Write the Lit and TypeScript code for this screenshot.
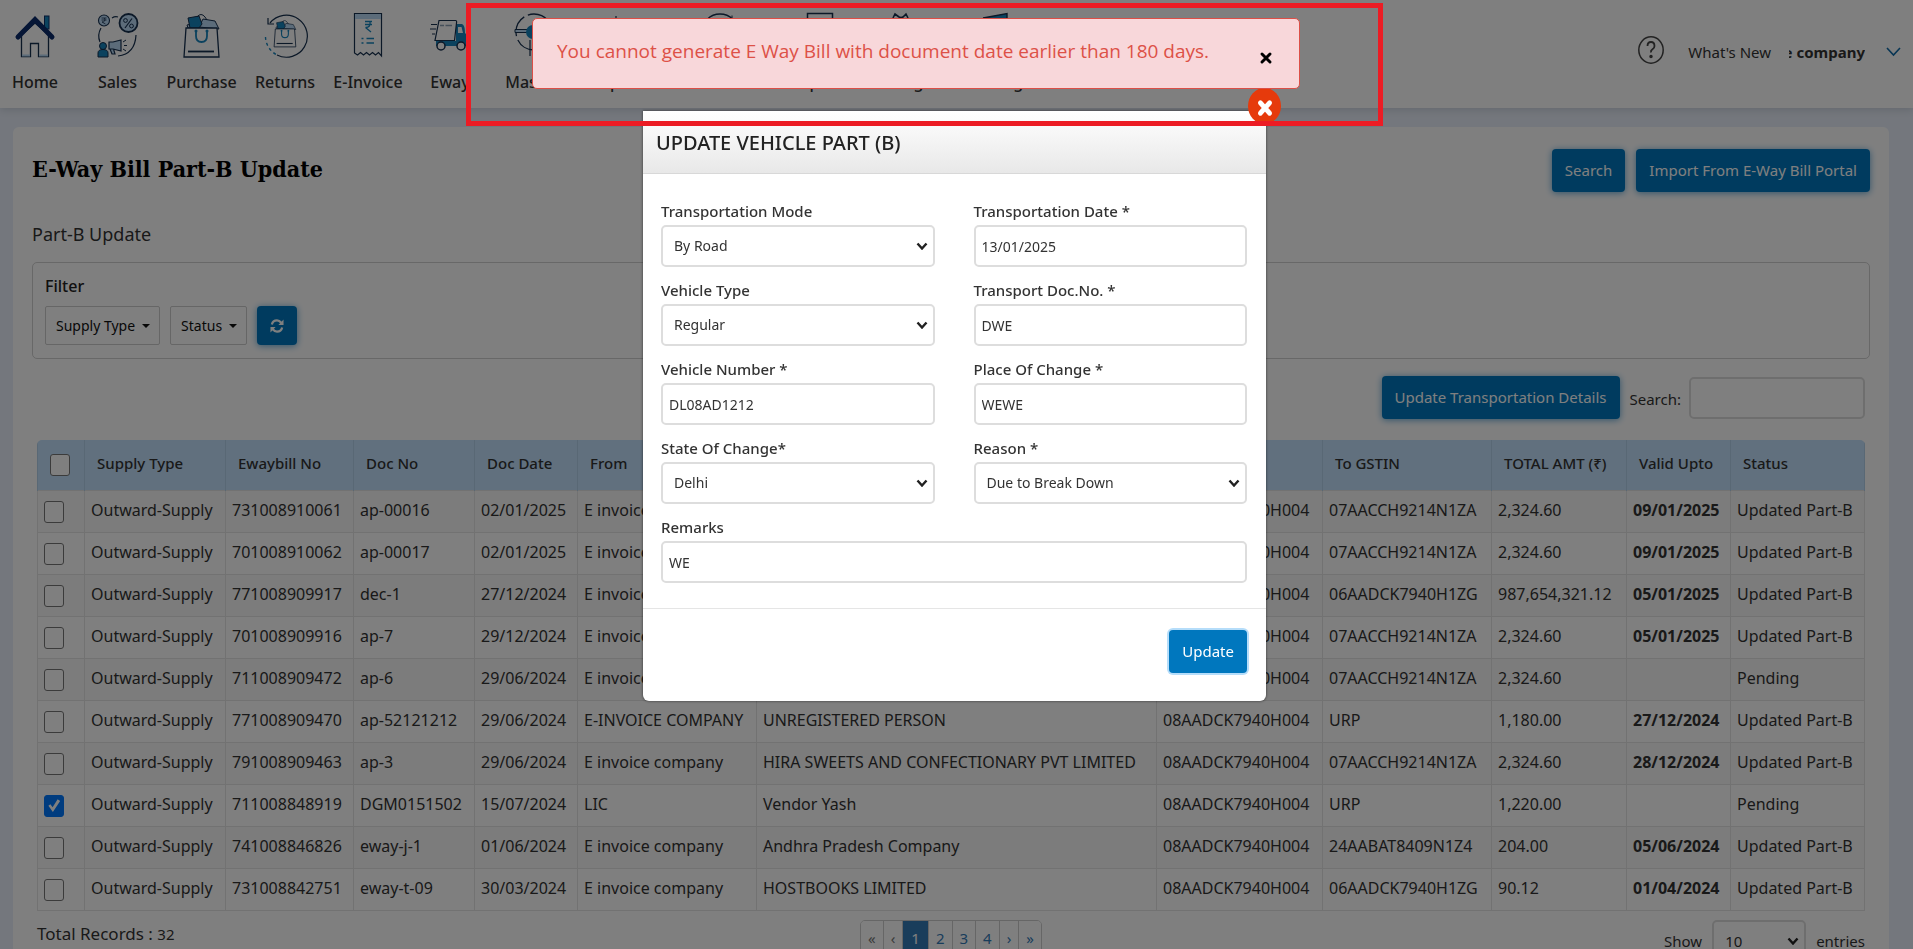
import { LitElement, html, svg, css } from "lit";
import { classMap } from "lit/directives/class-map.js";

type Row = {
  supply: string; bill: string; doc: string; date: string; from: string; to: string;
  fromGst: string; toGst: string; amount: string; valid: string; status: string; checked?: boolean;
};

const row = (
  bill: string, doc: string, date: string, from: string, to: string,
  toGst: string, amount: string, valid: string, status: string, checked = false,
): Row => ({ supply: "Outward-Supply", bill, doc, date, from, to, fromGst: "08AADCK7940H004", toGst, amount, valid, status, checked });

const ROWS: Row[] = [
  row("731008910061", "ap-00016", "02/01/2025", "E invoice company", "HOSTBOOKS LIMITED", "07AACCH9214N1ZA", "2,324.60", "09/01/2025", "Updated Part-B"),
  row("701008910062", "ap-00017", "02/01/2025", "E invoice company", "HOSTBOOKS LIMITED", "07AACCH9214N1ZA", "2,324.60", "09/01/2025", "Updated Part-B"),
  row("771008909917", "dec-1", "27/12/2024", "E invoice company", "HOSTBOOKS LIMITED", "06AADCK7940H1ZG", "987,654,321.12", "05/01/2025", "Updated Part-B"),
  row("701008909916", "ap-7", "29/12/2024", "E invoice company", "HOSTBOOKS LIMITED", "07AACCH9214N1ZA", "2,324.60", "05/01/2025", "Updated Part-B"),
  row("711008909472", "ap-6", "29/06/2024", "E invoice company", "HOSTBOOKS LIMITED", "07AACCH9214N1ZA", "2,324.60", "", "Pending"),
  row("771008909470", "ap-52121212", "29/06/2024", "E-INVOICE COMPANY", "UNREGISTERED PERSON", "URP", "1,180.00", "27/12/2024", "Updated Part-B"),
  row("791008909463", "ap-3", "29/06/2024", "E invoice company", "HIRA SWEETS AND CONFECTIONARY PVT LIMITED", "07AACCH9214N1ZA", "2,324.60", "28/12/2024", "Updated Part-B"),
  row("711008848919", "DGM0151502", "15/07/2024", "LIC", "Vendor Yash", "URP", "1,220.00", "", "Pending", true),
  row("741008846826", "eway-j-1", "01/06/2024", "E invoice company", "Andhra Pradesh Company", "24AABAT8409N1Z4", "204.00", "05/06/2024", "Updated Part-B"),
  row("731008842751", "eway-t-09", "30/03/2024", "E invoice company", "HOSTBOOKS LIMITED", "06AADCK7940H1ZG", "90.12", "01/04/2024", "Updated Part-B"),
];

const COLUMNS: [string, number][] = [
  ["", 47], ["Supply Type", 141], ["Ewaybill No", 128], ["Doc No", 121], ["Doc Date", 103],
  ["From", 179], ["To", 400], ["From GSTIN", 166], ["To GSTIN", 169], ["TOTAL AMT (₹)", 135],
  ["Valid Upto", 104], ["Status", 134],
];
const COLUMN_TOTAL = COLUMNS.reduce((sum, [, w]) => sum + w, 0);

const NAVY = "#16304f";
const BLUE = "#1684bd";
const PALE = "#b8d8f4";

const bag = svg`
  <path d="M9 16 8 13 17 11 20 16Z M20 15 24 7 36 9 40 17Z" fill=${PALE} stroke=${NAVY} stroke-width="1"/>
  <path d="M9 6 20 4 23 12 20 16 11 16Z" fill=${BLUE} stroke=${NAVY} stroke-width="1"/>
  <path d="M18 5Q22 0 26 5L28 8" fill="none" stroke=${NAVY} stroke-width="1"/>
  <path d="M7 16H38L40 45H5Z" fill="#fff" stroke=${NAVY} stroke-width="1.3"/>
  <path d="M17 19V24Q17 30 22.500 30T28 24V19" fill="none" stroke=${BLUE} stroke-width="1.8"/>
  <circle cx="17" cy="19" r="1.500" fill=${BLUE}/><circle cx="28" cy="19" r="1.500" fill=${BLUE}/>
  <path d="M9 39.500H35" stroke=${NAVY} stroke-width="1.8"/>`;

const ICONS: Record<string, unknown> = {
  home: svg`
    <rect x="32.500" y="4" width="4.500" height="13" fill=${BLUE} stroke="#0b2c66" stroke-width="1"/>
    <path d="M9.500 23V44.500H18.500V31.500H26.500V44.500H36.500V23L23 11Z" fill="#fff" stroke=${NAVY} stroke-width="1.3"/>
    <path d="M10 43.500H18M27 43.500H36" stroke=${PALE} stroke-width="2"/>
    <path d="M6 25 23 7.500 40 25" fill="none" stroke="#0a2a6b" stroke-width="5" stroke-linecap="round"/>`,
  sales: svg`
    <circle cx="9" cy="8.500" r="5.500" fill=${PALE} stroke=${NAVY} stroke-width="1.1"/>
    <path d="M6.500 6H11.500M6.500 8H11.500M7 10Q11 10 9.500 6M7 10 10.500 12" fill="none" stroke=${NAVY} stroke-width=".8"/>
    <path d="M17 6Q20 4 23 5M6 16Q2 23 5 30M41 23Q40 42 23 44" fill="none" stroke=${NAVY} stroke-width="1.2"/>
    <circle cx="33.500" cy="11" r="9" fill=${PALE} stroke=${NAVY} stroke-width="1.8"/>
    <path d="M37 6.500 30 16" stroke=${NAVY} stroke-width="1.200"/>
    <circle cx="30.500" cy="8.500" r="1.900" fill="none" stroke=${NAVY}/><circle cx="36.500" cy="14" r="1.900" fill="none" stroke=${NAVY}/>
    <circle cx="8" cy="34" r="3.500" fill=${BLUE} stroke=${NAVY}/>
    <path d="M3 45V41Q3 37.500 8 37.500T13 41V45Z" fill=${BLUE} stroke=${NAVY}/>
    <path d="M14 30H18L26 28V39L18 37H14ZM15 37 17 42H20L18.500 37" fill=${PALE} stroke=${NAVY} stroke-width="1.2"/>
    <path d="M28 30 31 28M29 33.500H32M28 37 31 39" stroke=${NAVY} stroke-width="1"/>`,
  purchase: bag,
  returns: svg`
    <path d="M8 11A21 21 0 1 1 15 43" fill="none" stroke=${NAVY} stroke-width="1.200"/>
    <path d="M3.500 25A21 21 0 0 0 15 43" fill="none" stroke=${BLUE} stroke-width="1.400" stroke-dasharray="3 3"/>
    <path d="M6 6V12H12" fill="none" stroke=${NAVY} stroke-width="1.200"/>
    <g transform="translate(9 7) scale(.62)">${bag}</g>`,
  invoice: svg`
    <path d="M9.500 1.500H36.500V44L33.500 40.500 30.500 43 27.500 40.500 24.500 43 21.500 40.500 18.500 43 15.500 40.500 12.500 43 9.500 41Z" fill="#fff" stroke=${NAVY} stroke-width="1.200"/>
    <path d="M10 2H36V7H10Z" fill=${PALE}/>
    <path d="M20 9.500H27M20 12.500H27M20.500 15.500Q26 15.500 25 9.500M20.500 15.500 26 20M16.500 26.500H18.500M21.500 26.500H29M16.500 31H18.500M21.500 31H29" fill="none" stroke=${BLUE} stroke-width="1.300"/>`,
  truck: svg`
    <path d="M4 12.500H10M3 17H9M5 22H8" stroke=${NAVY} stroke-width="1.200"/>
    <path d="M29 12H35Q38 13 38 21L41 24V34H9V29H29Z" fill=${BLUE}/><path d="M31 15H34.500L36 21H31Z" fill="#fff"/>
    <path d="M12 8.500H28.500Q30 8.500 29.500 11L27.500 28.500H8Z" fill="#fff" stroke=${NAVY} stroke-width="1.200"/>
    <path d="M13 13.500H17M18.500 13.500H25" stroke="#8aa0b5" stroke-width="1.500"/>
    <circle cx="14" cy="34" r="4" fill="#fff" stroke=${NAVY} stroke-width="1.500"/><circle cx="34" cy="34" r="4" fill="#fff" stroke=${NAVY} stroke-width="1.500"/>`,
  masters: svg`
    <circle cx="21" cy="20" r="18" fill="none" stroke=${NAVY} stroke-width="1.300" stroke-dasharray="22 4"/>
    <path d="M2 17.500H22V20.500H2Z" fill=${PALE} stroke=${NAVY} stroke-width="1"/><circle cx="20" cy="20" r="7" fill=${BLUE}/>
    <path d="M17 28V44" stroke=${NAVY} stroke-width="1.200"/>`,
  spark: svg`<path d="M23 4V8" stroke=${NAVY} stroke-width="1.200"/>`,
  arc: svg`<circle cx="23" cy="20" r="18" fill="none" stroke=${NAVY} stroke-width="1.300"/><path d="M35 3.500V8" stroke=${NAVY}/>`,
  sheet: svg`<rect x="10.500" y="1.500" width="25" height="42" fill="none" stroke=${NAVY} stroke-width="1.500"/>`,
  gear: svg`<path d="M16 6 18 2 22 5Q24 6 26 5L29 2 31 6" fill="none" stroke=${NAVY} stroke-width="1.600"/>`,
  board: svg`<path d="M14 6 38 1.500V7" fill=${BLUE} stroke=${NAVY} stroke-width="1.400"/>`,
};

const NAV: [string, string][] = [
  ["home", "Home"], ["sales", "Sales"], ["purchase", "Purchase"], ["returns", "Returns"],
  ["invoice", "E-Invoice"], ["truck", "Eway"], ["masters", "Masters"], ["spark", "Import"],
  ["arc", "Reconcile"], ["sheet", "Reports"], ["gear", "Settings"], ["board", "Training"],
];

const FIELDS: { id: string; label: string; value: string; select?: boolean; wide?: boolean }[] = [
  { id: "mode", label: "Transportation Mode", value: "By Road", select: true },
  { id: "date", label: "Transportation Date *", value: "13/01/2025" },
  { id: "type", label: "Vehicle Type", value: "Regular", select: true },
  { id: "docno", label: "Transport Doc.No. *", value: "DWE" },
  { id: "vehicle", label: "Vehicle Number *", value: "DL08AD1212" },
  { id: "place", label: "Place Of Change *", value: "WEWE" },
  { id: "state", label: "State Of Change*", value: "Delhi", select: true },
  { id: "reason", label: "Reason *", value: "Due to Break Down", select: true },
  { id: "remarks", label: "Remarks", value: "WE", wide: true },
];

const cross = svg`<path class="cross" d="M3 3 11 11M11 3 3 11"/>`;

class AppRoot extends LitElement {
  static styles = css`
    * { box-sizing: border-box; }
    :host {
      display: block; position: relative; height: 100vh; overflow: hidden;
      background: #e9effa; color: #333; font: 400 16px/24px "Noto Sans", "Open Sans", sans-serif;
    }
    button, input, select { font: inherit; color: inherit; }
    button { cursor: pointer; border: 0; }
    a { color: inherit; text-decoration: none; }
    h1, h2, h3, p { margin: 0; font-weight: 400; }

    header { display: flex; justify-content: space-between; height: 108px; background: #fff; box-shadow: 0 2px 8px #c8d0dc; }
    nav { display: grid; grid-template-columns: 70px 95px 73px 94px 72px 92px 80px 80px 128px 72px 88px 96px; padding-top: 12px; }
    .nav-item { display: flex; flex-direction: column; align-items: center; gap: 12px; font-weight: 500; }
    .nav-item svg { width: 46px; height: 46px; }
    .account { display: flex; align-items: center; height: 104px; padding-right: 12px; font-size: 15px; }
    .help { width: 28px; height: 30px; margin: 0 23px 4px 0; }
    .company { display: flex; justify-content: flex-end; width: 76px; margin: 0 21px 0 18px; overflow: hidden; white-space: nowrap; font-weight: 700; }
    .chevron { width: 15px; height: 10px; }

    main { margin: 19px 24px 0 13px; padding: 22px 19px; min-height: 900px; background: #fff; border-radius: 6px; }
    .title-row { display: flex; align-items: flex-start; gap: 11px; }
    h1 { flex: 1; font: 700 23px/39px "DejaVu Serif Condensed", "DejaVu Serif", serif; color: #000; }
    .btn {
      height: 43px; padding: 0 13px 2px; border-radius: 4px; background: #0077be; color: #fff;
      font-size: 15px; box-shadow: 0 1px 7px #5ea6d6;
    }
    h2 { margin: 29px 0 15px; font-size: 18px; line-height: 26px; }
    .filter { padding: 13px 12px; border: 1px solid #d0d0d0; border-radius: 5px; }
    .filter h3 { font-size: 16px; line-height: 20px; font-weight: 500; color: #222; }
    .filter-row { display: flex; align-items: center; gap: 10px; margin-top: 10px; }
    .drop { display: flex; align-items: center; gap: 7px; height: 39px; padding: 0 9px 0 10px; background: #fff; border: 1px solid #ccc; border-radius: 2px; font-size: 14px; color: #111; }
    .caret { border: 4px solid transparent; border-top-color: #111; border-bottom: 0; }
    .refresh { display: grid; place-items: center; width: 40px; height: 39px; padding: 0; }
    .refresh svg { width: 14px; height: 16px; }
    .toolbar { display: flex; justify-content: flex-end; align-items: center; margin: 17px 5px 0; }
    .toolbar label { margin: 2px 8px 0 10px; font-size: 15px; }
    .box { height: 42px; border: 2px solid #ddd; border-radius: 5px; background-color: #fff; }
    .search { width: 176px; padding: 0 6px; }

    .grid { margin: 21px 5px 0; border-radius: 5px 5px 0 0; overflow: hidden; }
    table { width: 100%; table-layout: fixed; border-collapse: collapse; white-space: nowrap; }
    th { height: 50px; padding: 0 12px 3px; background: #c2e0fc; border: 1px solid #b2d0ea; border-width: 0 1px; text-align: left; font-size: 15px; font-weight: 500; }
    td { height: 42px; padding: 0 0 3px 6px; border: 1px solid #e4e4e4; }
    tbody tr:nth-child(odd) { background: #f8f8f8; }
    .valid { font-weight: 700; }
    .check {
      appearance: none; display: grid; place-items: center; width: 20px; height: 22px; margin: 4px 0 0;
      border: 1px solid #777; border-radius: 3px; background: #fff;
    }
    .check:checked { background: #0078ff; border-color: #0078ff; }
    .check:checked::before { content: ""; width: 14px; height: 15px; background: #fff; clip-path: polygon(10% 52%, 24% 42%, 40% 62%, 76% 8%, 94% 20%, 42% 94%); }

    .foot { display: grid; grid-template-columns: 1fr auto 1fr; align-items: start; margin: 9px 5px 0; }
    .total { padding-top: 2px; font-size: 17px; }
    .total span { font-size: 15px; }
    .pages { display: flex; border: 1px solid #ccc; border-radius: 5px; overflow: hidden; }
    .page { height: 34px; padding: 0 7px; background: #fff; color: #337ab7; border-right: 1px solid #ccc; font-size: 15px; line-height: 30px; }
    .page:last-child { border-right: 0; }
    .page.muted { color: #777; }
    .page.active { padding: 0 8px; background: #337ab7; color: #fff; }
    .show { display: flex; justify-content: flex-end; align-items: center; gap: 10px; font-size: 15px; }
    .pick {
      appearance: none; padding: 0 24px 0 11px;
      background: #fff url('data:image/svg+xml,<svg xmlns="http://www.w3.org/2000/svg" width="12" height="8"><path d="M1.500 1.500 6 6.500 10.500 1.500" fill="none" stroke="%23222" stroke-width="2.400"/></svg>') no-repeat right 5px center;
    }
    .show .pick { width: 94px; }

    .backdrop { position: fixed; inset: 0; background: rgba(0, 0, 0, 0.5); }
    .modal {
      position: fixed; top: 111px; left: 0; right: 4px; width: 623px; margin: 0 auto;
      background: #fff; border-radius: 0 0 6px 6px; box-shadow: 0 0 3px rgba(0, 0, 0, 0.6);
    }
    .modal-head { height: 63px; padding: 18px 13px; background: linear-gradient(#fff, #e8e8e8); border-bottom: 1px solid #d8d8d8; }
    .modal-head h2 { margin: 0; font-size: 20px; line-height: 28px; font-weight: 500; color: #222; }
    .cross { fill: none; stroke: currentColor; stroke-width: 3; stroke-linecap: round; }
    .modal-close {
      position: absolute; top: -23px; right: -15px; display: grid; place-items: center;
      width: 33px; height: 36px; padding: 4px 0 0; border-radius: 50%; background: #e63a0c; color: #fff;
    }
    .modal-close svg { width: 16px; height: 18px; }
    .modal-close .cross { stroke-width: 4; }
    .form { display: grid; grid-template-columns: 1fr 1fr; gap: 13px 39px; padding: 27px 19px 25px 18px; }
    .field { display: flex; flex-direction: column; gap: 4px; min-width: 0; }
    .field.wide { grid-column: span 2; }
    .field label { font-size: 15px; line-height: 20px; font-weight: 500; }
    .field .box { width: 100%; font-size: 14px; }
    .text { padding: 0 6px; }
    .modal-foot { display: flex; justify-content: flex-end; padding: 21px 19px 28px; border-top: 1px solid #e5e5e5; }
    .modal-foot .btn { box-shadow: 0 0 0 2px #b5ddfa; }

    .alert {
      position: fixed; top: 18px; left: 532px; width: 768px; display: flex; justify-content: space-between;
      padding: 18px 26px 22px 24px; background: #f8d7da; border: 1px solid #dc4f47; border-radius: 5px;
      color: #dd5147; font: 400 19px/29px "Open Sans", "Noto Sans", sans-serif;
    }
    .alert button { width: 14px; height: 14px; margin-top: 14px; padding: 0; background: none; color: #000; }
    .alert svg { display: block; width: 14px; height: 14px; }
    .highlight { position: fixed; top: 3px; left: 466px; width: 917px; height: 123px; border: 5px solid #ec1c24; pointer-events: none; }
  `;

  render() {
    return html`
      <header>
        <nav>
          ${NAV.map(([icon, label]) => html`
            <a class="nav-item" href="#"><svg viewBox="0 0 46 46" aria-hidden="true">${ICONS[icon]}</svg>${label}</a>`)}
        </nav>
        <div class="account">
          <svg class="help" viewBox="0 0 28 30" aria-hidden="true" fill="none" stroke="#444" stroke-width="1.500">
            <ellipse cx="14" cy="15" rx="12.200" ry="13.200"/>
            <path d="M10.500 11Q10.500 7 14 7T17.500 11Q17.500 13 15.500 14.300T14 17.500" stroke-width="1.800"/>
            <circle cx="14" cy="21.500" r="1" fill="#444"/>
          </svg>
          <a href="#">What's New</a>
          <div class="company"><span>E Invoice company</span></div>
          <svg class="chevron" viewBox="0 0 15 10" aria-hidden="true"><path d="M1 1 7.500 8 14 1" fill="none" stroke="#0f6aa8" stroke-width="1.600"/></svg>
        </div>
      </header>

      <main>
        <div class="title-row">
          <h1>E-Way Bill Part-B Update</h1>
          <button class="btn">Search</button>
          <button class="btn">Import From E-Way Bill Portal</button>
        </div>
        <h2>Part-B Update</h2>
        <section class="filter">
          <h3>Filter</h3>
          <div class="filter-row">
            <button class="drop">Supply Type<span class="caret"></span></button>
            <button class="drop">Status<span class="caret"></span></button>
            <button class="btn refresh" aria-label="Refresh">
              <svg viewBox="0 0 15 16" fill="none" stroke="#fff" stroke-width="2.400">
                <path d="M2 6.500Q3 2 7.500 2Q10 2 12 4.500M13 9.500Q12 14 7.500 14Q5 14 3 11.500"/>
                <path d="M14.500 1V7H9ZM.500 15V9H6Z" fill="#fff" stroke="none"/>
              </svg>
            </button>
          </div>
        </section>
        <div class="toolbar">
          <button class="btn">Update Transportation Details</button>
          <label for="search">Search:</label>
          <input id="search" class="box search" type="text" />
        </div>
        <div class="grid">
          <table>
            <colgroup>${COLUMNS.map(([, w]) => html`<col style="width:${(w / COLUMN_TOTAL) * 100}%" />`)}</colgroup>
            <thead>
              <tr>${COLUMNS.map(([name], i) => html`<th>${i === 0 ? html`<input class="check" type="checkbox" aria-label="Select all" />` : name}</th>`)}</tr>
            </thead>
            <tbody>
              ${ROWS.map((r) => html`<tr>
                <td><input class="check" type="checkbox" aria-label=${r.bill} .checked=${!!r.checked} /></td>
                <td>${r.supply}</td><td>${r.bill}</td><td>${r.doc}</td><td>${r.date}</td><td>${r.from}</td><td>${r.to}</td>
                <td>${r.fromGst}</td><td>${r.toGst}</td><td>${r.amount}</td><td class="valid">${r.valid}</td><td>${r.status}</td>
              </tr>`)}
            </tbody>
          </table>
        </div>
        <div class="foot">
          <p class="total">Total Records : <span>32</span></p>
          <div class="pages">
            ${["«", "‹", "1", "2", "3", "4", "›", "»"].map((p, i) => html`
              <button class=${classMap({ page: true, muted: i < 2, active: i === 2 })}>${p}</button>`)}
          </div>
          <div class="show">
            <label for="size">Show</label>
            <select id="size" class="box pick"><option>10</option></select>
            <span>entries</span>
          </div>
        </div>
      </main>

      <div class="backdrop"></div>

      <div class="modal" role="dialog" aria-labelledby="modal-title">
        <div class="modal-head"><h2 id="modal-title">UPDATE VEHICLE PART (B)</h2></div>
        <button class="modal-close" aria-label="Close"><svg viewBox="0 0 14 14" preserveAspectRatio="none">${cross}</svg></button>
        <div class="form">
          ${FIELDS.map((f) => html`
            <div class=${classMap({ field: true, wide: !!f.wide })}>
              <label for=${f.id}>${f.label}</label>
              ${f.select
                ? html`<select id=${f.id} class="box pick"><option>${f.value}</option></select>`
                : html`<input id=${f.id} class="box text" type="text" .value=${f.value} />`}
            </div>`)}
        </div>
        <div class="modal-foot"><button class="btn">Update</button></div>
      </div>

      <div class="alert" role="alert">
        <span>You cannot generate E Way Bill with document date earlier than 180 days.</span>
        <button aria-label="Dismiss"><svg viewBox="0 0 14 14">${cross}</svg></button>
      </div>
      <div class="highlight"></div>
    `;
  }
}
customElements.define("app-root", AppRoot);
